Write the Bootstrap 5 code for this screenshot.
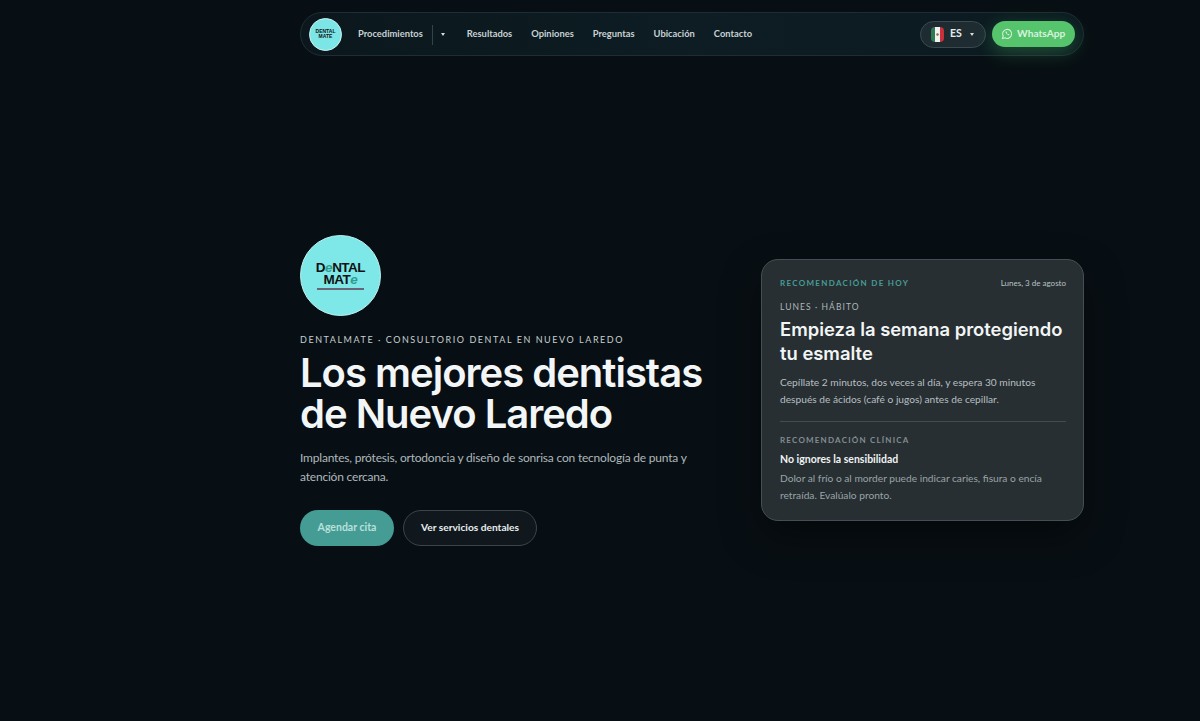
<!DOCTYPE html>
<html lang="es">
<head>
  <meta charset="UTF-8" />
  <meta name="viewport" content="width=device-width, initial-scale=1.0" />
  <title>DentalMate</title>
  <link rel="stylesheet" href="https://cdn.jsdelivr.net/npm/bootstrap@5.3.0/dist/css/bootstrap.min.css">
  <style>
    html, body { height: 721px; overflow: hidden; }
    body { background: #080f14; font-family: "Lato", "Liberation Sans", sans-serif; color: #fff; }
    .page-wrap { width: 784px; margin-left: 300px; }
    .top-bar { height: 44px; margin-top: 12px; padding: 0 8px; border: 1px solid #1d2d33; border-radius: 22px; background: linear-gradient(90deg, #0b171c, #0d1d23 50%, #0c1a20); }
    .nav-logo { width: 33px; height: 33px; border-radius: 50%; background: #7ce6e6; border: 1px solid #c8f4f2; flex: none; color: #111; font: 700 5px/5px "Liberation Sans", sans-serif; text-align: center; }
    .nav-links { margin-left: 16px; padding-top: 1px; font-size: 9.35px; font-weight: 700; color: #c8d1d3; }
    .nav-links a { color: inherit; text-decoration: none; }
    .nav-links .gap-item { margin-left: 19px; }
    .nav-links .first-item { margin-left: 22px; }
    .nav-sep { width: 1px; height: 20px; background: #33434a; margin: 0 8px 0 9px; }
    .caret-mini { width: 0; height: 0; border-left: 2.5px solid transparent; border-right: 2.5px solid transparent; border-top: 3px solid #d4dcde; }
    .lang-btn { width: 66px; height: 27px; border: 1px solid #3a4a50; border-radius: 14px; background: #1e2c32; font-size: 10.5px; font-weight: 700; color: #e6ecec; padding-left: 10px; }
    .flag-icon { width: 13px; height: 15px; border-radius: 4px; overflow: hidden; margin-right: 6px; }
    .wa-btn { width: 83px; height: 26px; margin-left: 6px; padding-left: 9px; border-radius: 13px; background: #55c46c; color: #d9f3df; font-size: 10.2px; font-weight: 700; box-shadow: 0 5px 18px rgba(70, 200, 100, .32); }
    .hero-row { height: 526px; padding-top: 179px; }
    .hero-left { width: 420px; }
    .hero-logo { width: 81px; height: 81px; border-radius: 50%; background: #7ee8e8; border: 1px solid #bdf2f0; color: #111; font-family: "Liberation Sans", sans-serif; font-weight: 700; font-size: 13.5px; letter-spacing: -.5px; line-height: 12px; text-align: center; }
    .logo-e { color: #2f9c90; font-style: italic; }
    .logo-rule { width: 47px; height: 2px; background: #667; margin-top: 2px; }
    .eyebrow { margin-top: 18px; font-size: 9px; letter-spacing: 1.55px; color: #c6cfd1; line-height: 12px; white-space: nowrap; }
    .hero-title { margin: 6px 0 0; font-family: "Inter", sans-serif; font-size: 40px; line-height: 41px; font-weight: 600; letter-spacing: -1px; color: #f3f6f6; white-space: nowrap; }
    .hero-text { margin: 14px 0 0; font-size: 12px; letter-spacing: -.2px; line-height: 19px; color: #aeb8bb; width: 410px; }
    .cta-row { margin-top: 24px; gap: 9px; }
    .cta-main { width: 94px; height: 36px; border-radius: 18px; background: #459c95; color: #b9e0da; font-size: 10.5px; font-weight: 700; }
    .cta-ghost { width: 134px; height: 36px; border-radius: 18px; border: 1px solid #3a464c; background: #10181d; color: #e8eeee; font-size: 10.2px; font-weight: 700; }
    .tip-card { width: 323px; height: 262px; margin-top: 24px; padding: 16px 17px 0 18px; border: 1px solid #444f54; border-radius: 17px; background: #272f33; box-shadow: 0 16px 40px rgba(0, 0, 0, .45); }
    .tip-label { font-size: 8px; font-weight: 700; letter-spacing: 1.3px; color: #479c94; line-height: 14px; }
    .tip-date { font-size: 8px; color: #b9c1c4; }
    .tip-sub { margin-top: 11px; font-size: 8.5px; letter-spacing: 1.07px; color: #aeb6b9; line-height: 12px; }
    .tip-title { margin: 4px 0 0; font-family: "Inter", sans-serif; font-size: 18.4px; line-height: 24px; font-weight: 600; color: #f2f5f5; }
    .tip-body { margin: 9px 0 0; font-size: 10.2px; line-height: 17px; color: #b7bfc2; }
    .tip-line { height: 1px; background: #434d51; margin: 13px 0 0; }
    .tip-label-2 { margin-top: 12px; font-size: 8px; font-weight: 700; letter-spacing: 1.2px; color: #838d91; line-height: 12px; }
    .tip-strong { margin: 6px 0 0; font-size: 10.5px; line-height: 14px; font-weight: 700; color: #f0f3f3; }
    .tip-note { margin: 4px 0 0; font-size: 10.2px; line-height: 17px; color: #9aa3a6; }
  </style>
</head>
<body>
  <div class="page-wrap">
    <nav class="top-bar d-flex align-items-center">
      <div class="nav-logo d-flex align-items-center justify-content-center">DENTAL<br>MATE</div>
      <div class="nav-links d-flex align-items-center">
        <a href="#">Procedimientos</a>
        <span class="nav-sep"></span>
        <span class="caret-mini"></span>
        <a href="#" class="first-item">Resultados</a>
        <a href="#" class="gap-item">Opiniones</a>
        <a href="#" class="gap-item">Preguntas</a>
        <a href="#" class="gap-item">Ubicación</a>
        <a href="#" class="gap-item">Contacto</a>
      </div>
      <div class="ms-auto d-flex align-items-center">
        <div class="lang-btn d-flex align-items-center">
          <span class="flag-icon">
            <svg width="13" height="15" viewBox="0 0 13 15"><rect width="4" height="15" fill="#2f7a55"/><rect x="4" width="5" height="15" fill="#f2f2f2"/><rect x="9" width="4" height="15" fill="#c8303a"/><circle cx="6.5" cy="7.5" r="1.2" fill="#8a6a3a"/></svg>
          </span>
          <span>ES</span>
          <span class="caret-mini ms-2"></span>
        </div>
        <a href="#" class="wa-btn d-flex align-items-center gap-1 text-decoration-none">
          <svg width="12" height="12" viewBox="0 0 16 16" fill="none" stroke="#d9f3df" stroke-width="1.4"><path d="M2 14l.9-3.2A6 6 0 1 1 5.2 13.1L2 14z"/><path d="M5.8 5c.8 2.6 2.2 4 4.8 4.9l.8-1.2-1.5-.8-.6.5c-.7-.4-1.2-1-1.6-1.7l.5-.6L7.6 4.6z" fill="#d9f3df" stroke="none"/></svg>
          <span>WhatsApp</span>
        </a>
      </div>
    </nav>

    <div class="hero-row d-flex justify-content-between align-items-start">
      <div class="hero-left">
        <div class="hero-logo d-flex flex-column align-items-center justify-content-center">
          <div>D<span class="logo-e">e</span>NTAL</div>
          <div>MAT<span class="logo-e">e</span></div>
          <div class="logo-rule"></div>
        </div>
        <div class="eyebrow">DENTALMATE · CONSULTORIO DENTAL EN NUEVO LAREDO</div>
        <h1 class="hero-title">Los mejores dentistas<br>de Nuevo Laredo</h1>
        <p class="hero-text">Implantes, prótesis, ortodoncia y diseño de sonrisa con tecnología de punta y atención cercana.</p>
        <div class="cta-row d-flex">
          <a href="#" class="cta-main d-flex align-items-center justify-content-center text-decoration-none">Agendar cita</a>
          <a href="#" class="cta-ghost d-flex align-items-center justify-content-center text-decoration-none">Ver servicios dentales</a>
        </div>
      </div>
      <aside class="tip-card">
        <div class="d-flex justify-content-between align-items-center">
          <span class="tip-label">RECOMENDACIÓN DE HOY</span>
          <span class="tip-date">Lunes, 3 de agosto</span>
        </div>
        <div class="tip-sub">LUNES · HÁBITO</div>
        <h2 class="tip-title">Empieza la semana protegiendo tu esmalte</h2>
        <p class="tip-body">Cepíllate 2 minutos, dos veces al día, y espera 30 minutos después de ácidos (café o jugos) antes de cepillar.</p>
        <div class="tip-line"></div>
        <div class="tip-label-2">RECOMENDACIÓN CLÍNICA</div>
        <p class="tip-strong">No ignores la sensibilidad</p>
        <p class="tip-note">Dolor al frío o al morder puede indicar caries, fisura o encía retraída. Evalúalo pronto.</p>
      </aside>
    </div>
  </div>
  <script src="https://cdn.jsdelivr.net/npm/bootstrap@5.3.0/dist/js/bootstrap.bundle.min.js"></script>
</body>
</html>
